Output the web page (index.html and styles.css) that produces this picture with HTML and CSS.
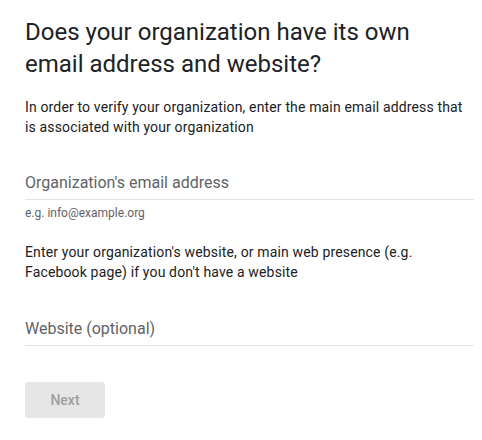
FILE: index.html
```html
<!DOCTYPE html>
<html lang="en">
<head>
<meta charset="utf-8">
<title>Organization verification</title>
<link rel="stylesheet" href="styles.css">
</head>
<body>
<main class="page">
  <h1 class="title">Does your organization have its own email address and website?</h1>
  <p class="intro">In order to verify your organization, enter the main email address that is associated with your organization</p>
  <div class="field field-email">
    <div class="field-label">Organization's email address</div>
  </div>
  <div class="helper">e.g. info@example.org</div>
  <p class="intro intro-second">Enter your organization's website, or main web presence (e.g. Facebook page) if you don't have a website</p>
  <div class="field field-web">
    <div class="field-label">Website (optional)</div>
  </div>
  <div class="actions">
    <button class="btn-next" type="button" disabled>Next</button>
  </div>
</main>
</body>
</html>
```

FILE: styles.css
```css
html, body {
  margin: 0;
  padding: 0;
  background: #ffffff;
}
.page {
  padding: 16px 8px 0 25px;
  font-family: Roboto, "Liberation Sans", Arial, sans-serif;
  color: #202124;
}
.title {
  margin: 0;
  font-family: Roboto, "Liberation Sans", sans-serif;
  font-weight: 400;
  font-size: 24px;
  line-height: 32px;
  color: #202124;
}
.intro {
  margin: 17px 0 0;
  font-size: 14px;
  line-height: 20px;
  letter-spacing: 0.15px;
  color: #202124;
}
.field {
  border-bottom: 1px solid #e3e3e3;
  padding-bottom: 4px;
}
.field-email {
  margin-top: 34px;
}
.field-label {
  font-size: 16px;
  line-height: 24px;
  color: #5f6368;
}
.helper {
  margin-top: 5px;
  font-size: 12px;
  line-height: 16px;
  color: #5f6368;
}
.intro-second {
  margin-top: 21px;
}
.field-web {
  margin-top: 35px;
}
.actions {
  margin-top: 36px;
}
.btn-next {
  width: 80px;
  height: 36px;
  border: none;
  border-radius: 4px;
  background: #e6e6e6;
  color: #9e9e9e;
  font-family: Roboto, "Liberation Sans", sans-serif;
  font-size: 14px;
  font-weight: 500;
  padding: 0;
}
```
